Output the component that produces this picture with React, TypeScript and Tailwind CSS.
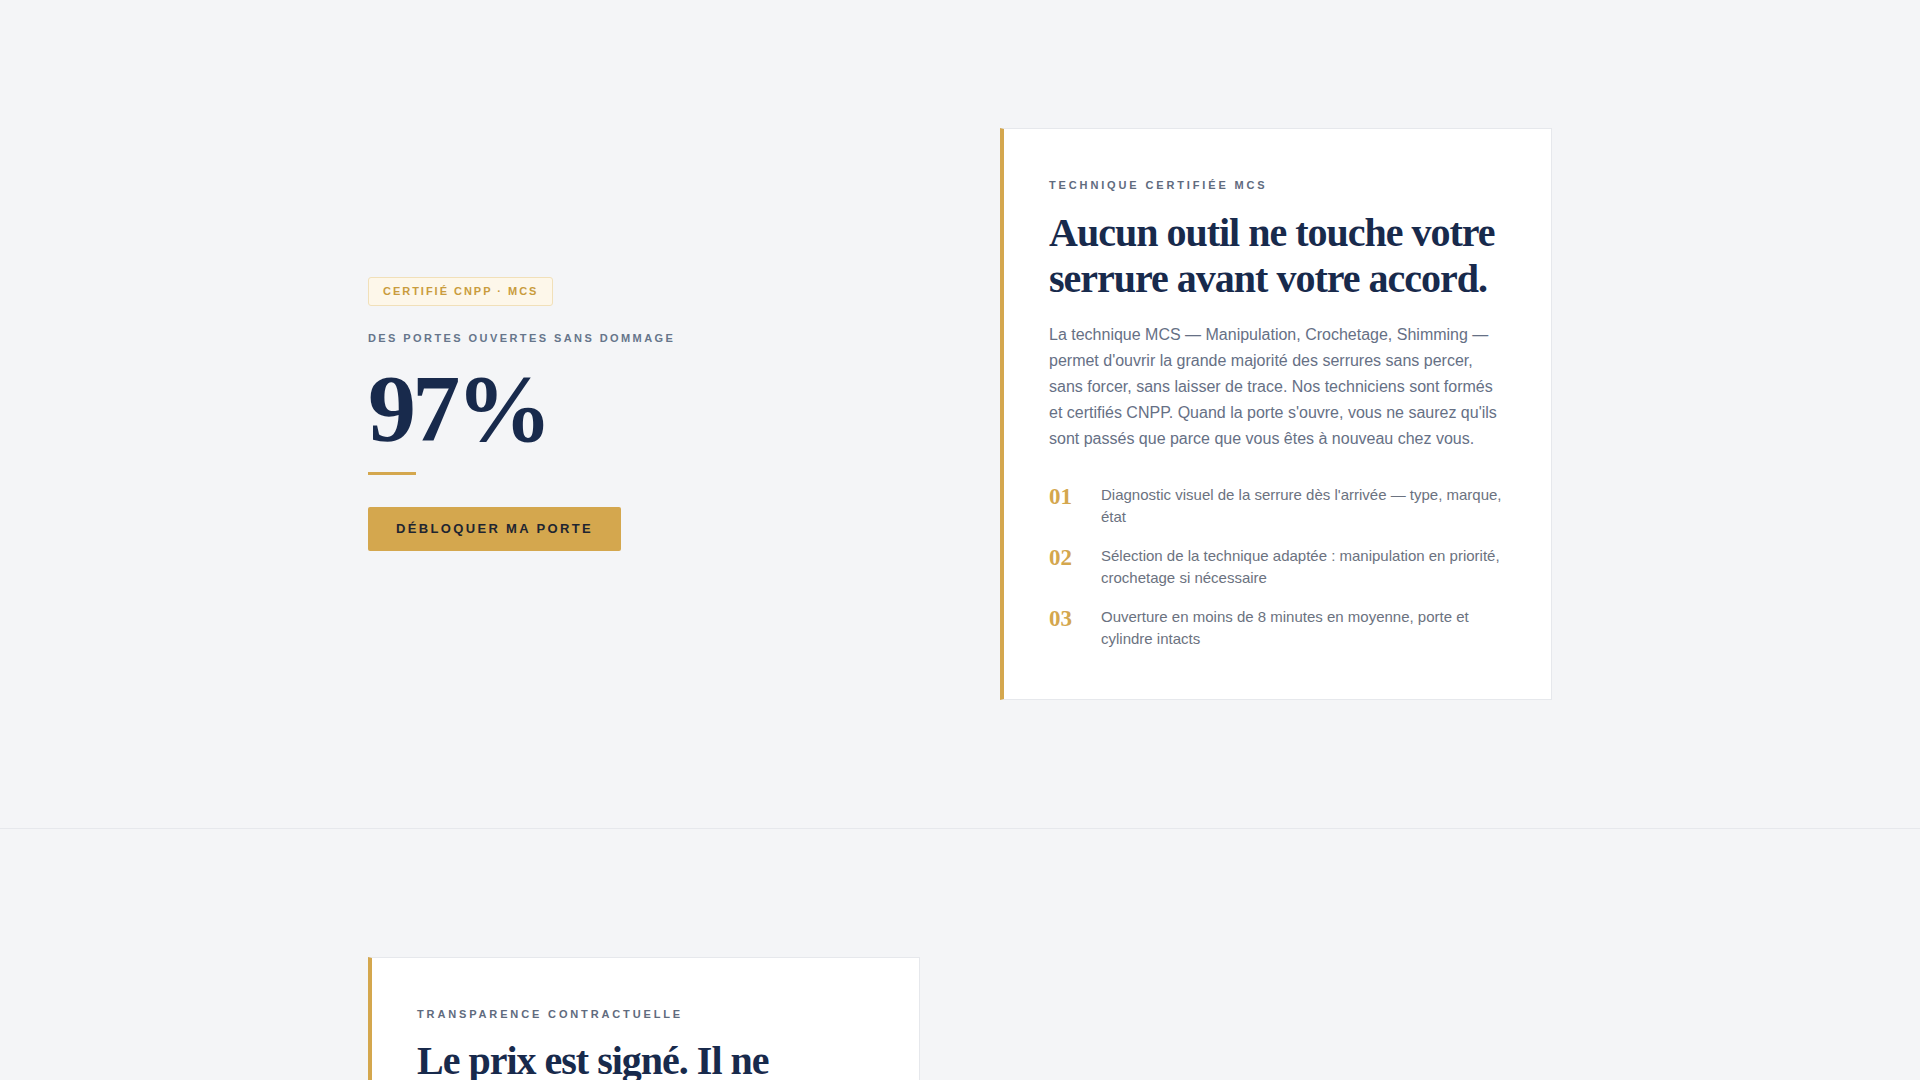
const serif = "font-['Liberation_Serif','Times_New_Roman',serif]"

const steps = [
  { n: '01', text: "Diagnostic visuel de la serrure dès l'arrivée — type, marque, état" },
  { n: '02', text: 'Sélection de la technique adaptée : manipulation en priorité, crochetage si nécessaire' },
  { n: '03', text: 'Ouverture en moins de 8 minutes en moyenne, porte et cylindre intacts' },
]

function Eyebrow({ children }: { children: React.ReactNode }) {
  return (
    <p className="text-[11px] font-bold uppercase leading-[16.5px] tracking-[0.26em] text-[#5f6b7e]">
      {children}
    </p>
  )
}

function Card({ children }: { children: React.ReactNode }) {
  return (
    <div className="border border-l-4 border-[#e6e8ec] border-l-[#d4a74e] bg-white py-12 pl-[45px] pr-12">
      {children}
    </div>
  )
}

export default function App() {
  return (
    <div className="min-h-screen bg-[#f4f5f7] font-['Liberation_Sans',Arial,sans-serif]">
      {/* Hero: stat on the left, method card on the right */}
      <section className="border-b border-[#e6e8ec] py-32">
        <div className="mx-auto grid max-w-[1184px] grid-cols-2 items-center gap-20">
          <div>
            <span className="inline-flex h-[29px] items-center rounded-[3px] border border-[#f1e0b9] bg-[#fdf7ea] px-[14px] text-[11px] font-bold tracking-[0.18em] text-[#c99c3d]">
              CERTIFIÉ CNPP · MCS
            </span>
            <p className="mt-6 text-[11px] font-bold leading-[16.5px] tracking-[0.22em] text-[#66758b]">
              DES PORTES OUVERTES SANS DOMMAGE
            </p>
            <p className={`${serif} mt-[14px] text-[96px] font-bold leading-none tracking-[-0.04em] text-[#182a4c]`}>
              97%
            </p>
            <div className="mt-[15px] h-[3px] w-12 bg-[#d4a74e]" />
            <button className="mt-8 flex h-[44px] items-center rounded-[2px] bg-[#d4a74e] px-7 text-[13px] font-bold tracking-[0.18em] text-[#1f2530]">
              DÉBLOQUER MA PORTE
            </button>
          </div>

          <Card>
            <Eyebrow>Technique certifiée MCS</Eyebrow>
            <h2 className={`${serif} mt-4 text-[40px] font-bold leading-[1.15] tracking-[-0.025em] text-[#182a4c]`}>
              Aucun outil ne touche votre serrure avant votre accord.
            </h2>
            <p className="mt-5 text-[16px] leading-[26px] text-[#667085]">
              La technique MCS — Manipulation, Crochetage, Shimming — permet d'ouvrir la grande majorité des
              serrures sans percer, sans forcer, sans laisser de trace. Nos techniciens sont formés et certifiés
              CNPP. Quand la porte s'ouvre, vous ne saurez qu'ils sont passés que parce que vous êtes à nouveau
              chez vous.
            </p>
            <ul className="mt-8 flex flex-col gap-4">
              {steps.map((s) => (
                <li key={s.n} className="flex items-start">
                  <span className={`${serif} mt-px w-[52px] shrink-0 text-[23px] font-bold leading-none text-[#d4a74e]`}>
                    {s.n}
                  </span>
                  <span className="text-[15px] leading-[22.5px] text-[#6b7280]">{s.text}</span>
                </li>
              ))}
            </ul>
          </Card>
        </div>
      </section>

      {/* Pricing transparency */}
      <section className="py-32">
        <div className="mx-auto grid max-w-[1184px] grid-cols-2 items-center gap-20">
          <Card>
            <Eyebrow>Transparence contractuelle</Eyebrow>
            <h2 className={`${serif} mt-4 text-[40px] font-bold leading-[1.15] tracking-[-0.025em] text-[#182a4c]`}>
              Le prix est signé. Il ne changera pas.
            </h2>
            <p className="mt-5 text-[16px] leading-[26px] text-[#667085]">
              Le devis est établi et signé avant toute intervention. Aucun supplément ne peut être ajouté une
              fois le travail commencé.
            </p>
          </Card>
          <div />
        </div>
      </section>
    </div>
  )
}
